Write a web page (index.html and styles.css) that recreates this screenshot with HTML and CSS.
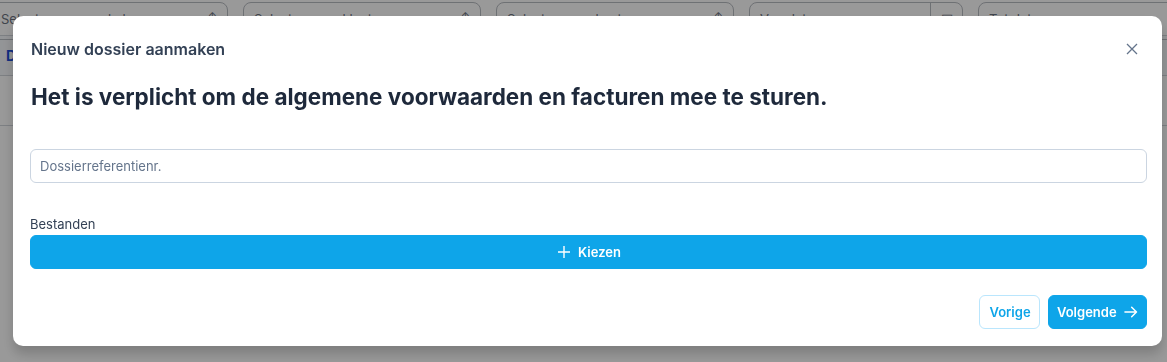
FILE: index.html
```html
<!DOCTYPE html>
<html lang="nl">
<head>
    <meta charset="UTF-8">
    <meta name="viewport" content="width=device-width, initial-scale=1.0">
    <title>Nieuw dossier aanmaken</title>
    <link rel="stylesheet" href="styles.css">
</head>
<body>
    <main class="page">
        <div class="filters">
            <div class="select">Selecteer een makelaar <span class="caret">&#8597;</span></div>
            <div class="select">Selecteer een klant <span class="caret">&#8597;</span></div>
            <div class="select">Selecteer een kantoor <span class="caret">&#8597;</span></div>
            <div class="select select-date">Van datum <span class="date-icon">&#9636;</span></div>
            <div class="select">Tot datum</div>
        </div>
        <table class="list">
            <thead>
                <tr><th>De</th><th></th><th></th></tr>
            </thead>
            <tbody>
                <tr><td>&nbsp;</td><td></td><td></td></tr>
            </tbody>
        </table>
    </main>

    <div class="overlay">
        <div class="modal">
            <div class="modal-head">
                <h2>Nieuw dossier aanmaken</h2>
                <button class="close" aria-label="Sluiten">
                    <svg width="12" height="12" viewBox="0 0 12 12"><path d="M1 1L11 11M11 1L1 11" stroke="#64748b" stroke-width="1.3" fill="none"/></svg>
                </button>
            </div>
            <h1 class="notice">Het is verplicht om de algemene voorwaarden en facturen mee te sturen.</h1>
            <input class="field" type="text" placeholder="Dossierreferentienr.">
            <label class="label">Bestanden</label>
            <button class="btn btn-wide">
                <svg width="14" height="14" viewBox="0 0 14 14"><path d="M7 1V13M1 7H13" stroke="#fff" stroke-width="1.4" fill="none"/></svg>
                Kiezen
            </button>
            <div class="modal-foot">
                <button class="btn btn-outline">Vorige</button>
                <button class="btn btn-next">Volgende
                    <svg width="15" height="14" viewBox="0 0 15 14"><path d="M1 7H13M8 2L13 7L8 12" stroke="#fff" stroke-width="1.6" fill="none" stroke-linecap="round" stroke-linejoin="round"/></svg>
                </button>
            </div>
        </div>
    </div>
</body>
</html>
```

FILE: styles.css
```css
* { margin: 0; padding: 0; box-sizing: border-box }
body { font-family: Inter, "Noto Sans", Arial, sans-serif; background: #fff; color: #334155; overflow: hidden; height: 362px }

/* page behind the dialog */
.page { padding-top: 2px }
.filters { display: flex; gap: 15px; margin-left: -10px }
.select { flex: 0 0 238px; height: 38px; border: 1px solid #b8bcc2; border-radius: 8px; font-size: 13px; color: #6b7280; padding: 8px 10px; position: relative; white-space: nowrap; overflow: hidden }
.select .caret { position: absolute; right: 10px; top: 8px; font-size: 11px }
.select-date { flex-basis: 214px }
.date-icon { position: absolute; right: 0; top: 0; width: 32px; height: 36px; border-left: 1px solid #b8bcc2; text-align: center; line-height: 30px }
.list { width: 100%; border-collapse: collapse; margin-top: -5px }
.list th { background: #f6f9fc; color: #1d4ed8; text-align: left; font-size: 14px; padding: 11px 6px; height: 40px; border-top: 1px solid #d1d5db; border-bottom: 1px solid #d1d5db }
.list td { height: 50px; border-bottom: 1px solid #d1d5db }

/* dialog */
.overlay { position: fixed; inset: 0; background: rgba(0, 0, 0, .4); padding: 16px 5px 0 13px }
.modal { width: 1149px; height: 330px; background: #fff; border-radius: 10px; box-shadow: 0 8px 12px rgba(0, 0, 0, .18); padding: 0 15px 0 17px; display: flex; flex-direction: column }
.modal-head { display: flex; justify-content: space-between; align-items: center; height: 64px; padding-top: 1px }
.modal-head h2 { font-size: 16px; font-weight: 600; color: #334155; padding-left: 1px }
.close { background: none; border: none; width: 20px; height: 20px; display: flex; align-items: center; justify-content: center; margin-right: 5px }
.notice { font-size: 22.5px; font-weight: 700; color: #1e293b; padding-left: 1px; margin-top: 1px; line-height: 32px }
.field { margin-top: 36px; height: 34px; width: 100%; border: 1px solid #cbd5e1; border-radius: 6px; padding: 0 9px; font: 13px Inter, "Noto Sans", sans-serif; color: #334155 }
.field::placeholder { color: #64748b }
.label { display: block; margin-top: 32px; margin-bottom: 2px; font-size: 13px; color: #334155; line-height: 18px }
.btn { display: inline-flex; align-items: center; justify-content: center; gap: 7px; height: 34px; padding: 0 9px 0 10px; border: 1px solid #0ea5e9; border-radius: 6px; background: #0ea5e9; color: #fff; font: 600 13px Inter, "Noto Sans", sans-serif }
.btn-wide { width: 100% }
.btn-next { width: 99px; padding: 0 8px }
.modal-foot { display: flex; justify-content: flex-end; gap: 8px; margin-top: 26px }
.btn-outline { background: #fff; border-color: #bae6fd; color: #0ea5e9; width: 61px }
```
